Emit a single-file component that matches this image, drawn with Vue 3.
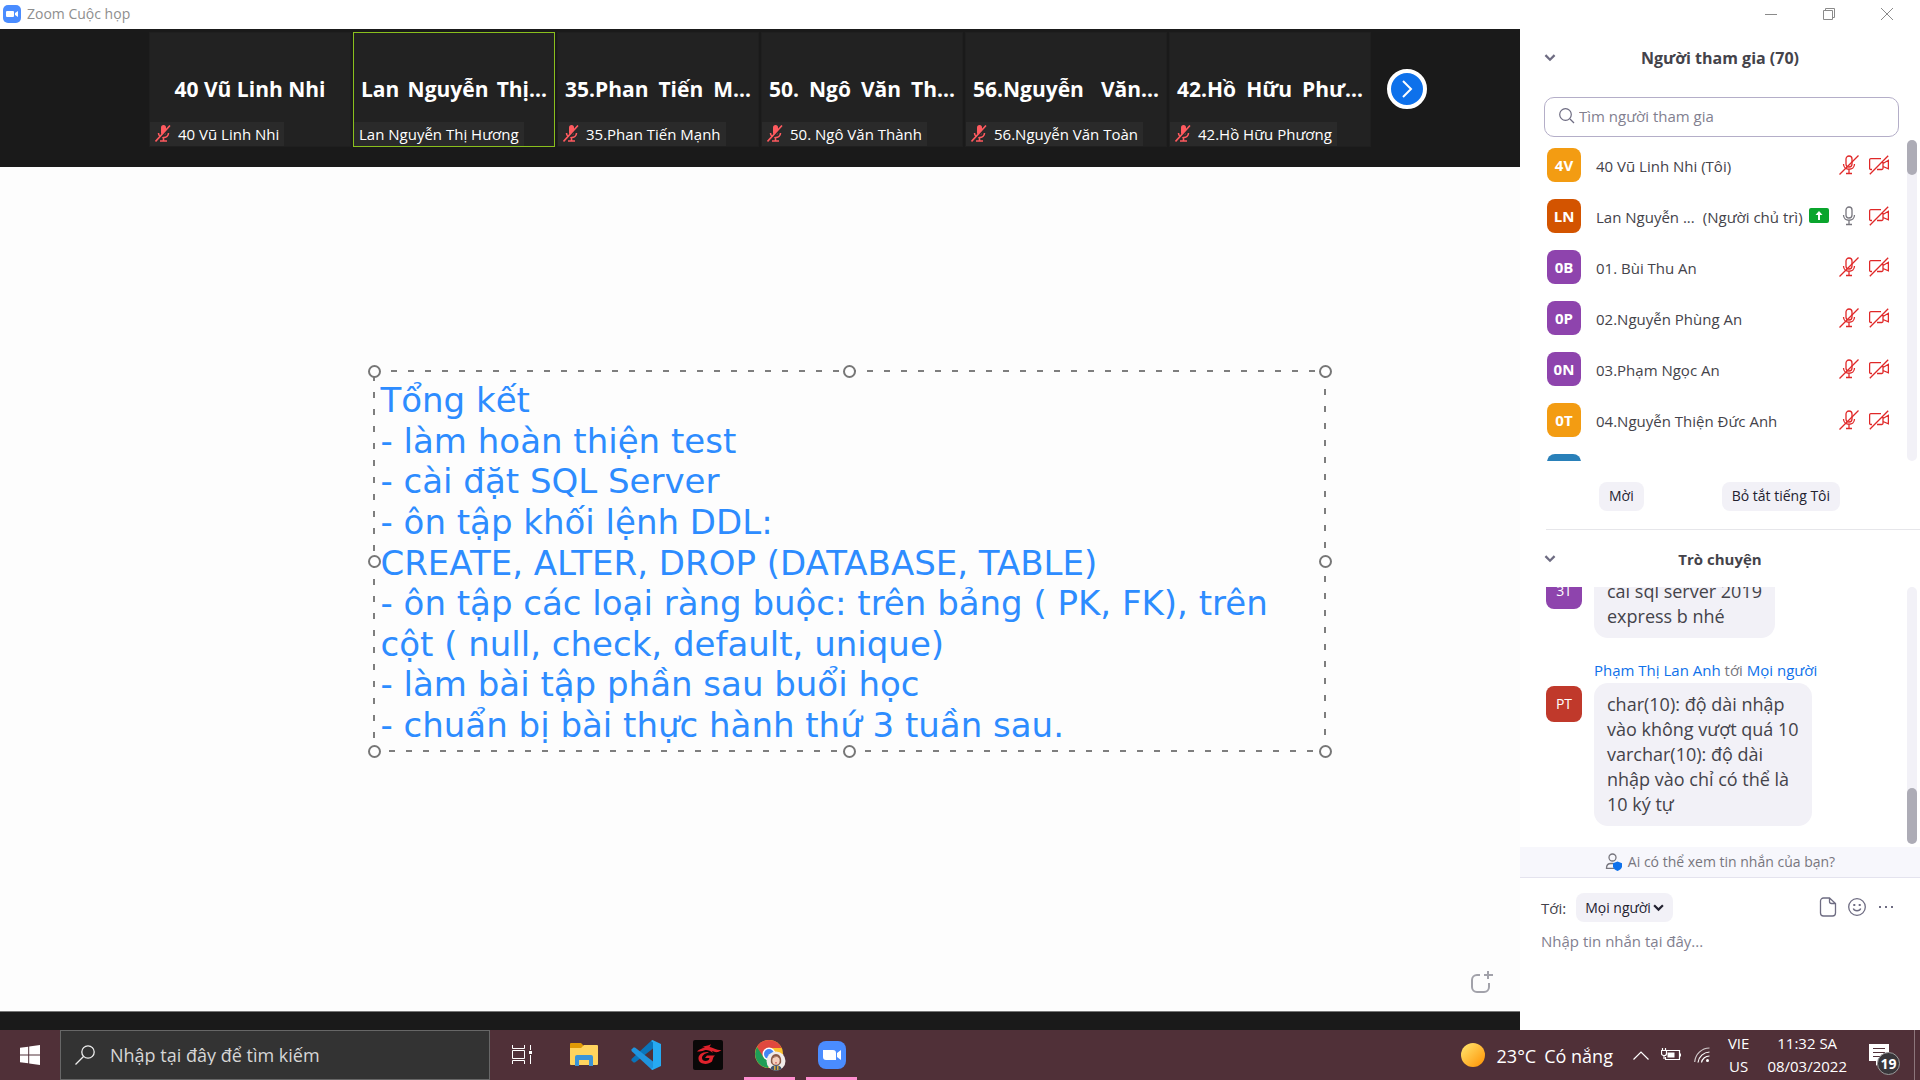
<script setup>
import { ref } from 'vue'

const tiles = [
  { name: '40 Vũ Linh Nhi', short: '40 Vũ Linh Nhi', muted: true },
  { name: 'Lan Nguyễn Thị Hương', short: 'Lan Nguyễn Thị...', cut: true, active: true },
  { name: '35.Phan Tiến Mạnh', short: '35.Phan Tiến M...', cut: true, muted: true },
  { name: '50. Ngô Văn Thành', short: '50. Ngô Văn Th...', cut: true, muted: true },
  { name: '56.Nguyễn Văn Toàn', short: '56.Nguyễn Văn...', cut: true, muted: true },
  { name: '42.Hồ Hữu Phương', short: '42.Hồ Hữu Phư...', cut: true, muted: true },
]

const notes = [
  'Tổng kết',
  '- làm hoàn thiện test',
  '- cài đặt SQL Server',
  '- ôn tập khối lệnh DDL:',
  'CREATE, ALTER, DROP (DATABASE, TABLE)',
  '- ôn tập các loại ràng buộc: trên bảng ( PK, FK), trên',
  'cột ( null, check, default, unique)',
  '- làm bài tập phần sau buổi học',
  '- chuẩn bị bài thực hành thứ 3 tuần sau.',
]

const handles = ['nw', 'n', 'ne', 'w', 'e', 'sw', 's', 'se']

const people = [
  { initials: '4V', name: '40 Vũ Linh Nhi (Tôi)', tone: 'amber', muted: true },
  { initials: 'LN', name: 'Lan Nguyễn ...', role: '(Người chủ trì)', tone: 'rust', muted: false, sharing: true },
  { initials: '0B', name: '01. Bùi Thu An', tone: 'violet', muted: true },
  { initials: '0P', name: '02.Nguyễn Phùng An', tone: 'violet', muted: true },
  { initials: '0N', name: '03.Phạm Ngọc An', tone: 'violet', muted: true },
  { initials: '0T', name: '04.Nguyễn Thiện Đức Anh', tone: 'amber', muted: true },
]

const reply = ['char(10): độ dài nhập', 'vào không vượt quá 10', 'varchar(10): độ dài', 'nhập vào chỉ có thể là', '10 ký tự']

const search = ref('')
const draft = ref('')
const query = ref('')
</script>

<template>
  <div class="desktop">
    <header class="titlebar">
      <svg class="app-logo" viewBox="0 0 18 18" aria-hidden="true">
        <rect width="18" height="18" rx="5" fill="#4a8cff" />
        <rect x="3" y="6" width="8" height="6" rx="1" fill="#fff" />
        <path d="M12 8l3-2v6l-3-2z" fill="#fff" />
      </svg>
      <span class="app-title">Zoom Cuộc họp</span>
      <div class="win-controls">
        <button type="button" aria-label="Thu nhỏ"><svg viewBox="0 0 12 12"><path d="M0 6.500h12" /></svg></button>
        <button type="button" aria-label="Khôi phục"><svg viewBox="0 0 12 12"><path d="M.5 2.500h9v9h-9zM2.500 2.500v-2h9v9h-2" /></svg></button>
        <button type="button" aria-label="Đóng"><svg viewBox="0 0 12 12"><path d="M0 0l12 12M12 0L0 12" /></svg></button>
      </div>
    </header>

    <div class="meeting">
      <main class="stage">
        <section class="strip">
          <div v-for="t in tiles" :key="t.name" class="tile" :class="{ active: t.active }">
            <strong class="tile-name" :class="{ cut: t.cut }">{{ t.short }}</strong>
            <span class="tile-label">
              <svg v-if="t.muted" class="tile-mic" viewBox="0 0 16 17" aria-hidden="true">
                <rect x="6" y="0" width="5" height="10" rx="2.500" fill="#ff5a5f" />
                <path d="M3.500 8c0 6 10 6 10 0M8.500 12.500V16M5 16h7" fill="none" stroke="#ff5a5f" stroke-width="1.600" />
                <path d="M2 17L16 1" stroke="#2a2a2a" stroke-width="2" />
                <path d="M.5 16.500L15 .5" stroke="#ff5a5f" stroke-width="1.600" />
              </svg>
              {{ t.name }}
            </span>
          </div>
          <button type="button" class="next" aria-label="Tiếp theo">
            <svg viewBox="0 0 12 18"><path d="M2 1l8 8-8 8" /></svg>
          </button>
        </section>

        <section class="canvas">
          <div class="note">
            <svg class="frame" aria-hidden="true"><rect x="1" y="1" width="100%" height="100%" /></svg>
            <p v-for="line in notes" :key="line">{{ line }}</p>
            <i v-for="h in handles" :key="h" class="handle" :class="h"></i>
          </div>
          <button type="button" class="new-page" aria-label="Trang mới">
            <svg viewBox="0 0 24 24"><path d="M10 5H7a5 5 0 0 0-5 5v7a5 5 0 0 0 5 5h7a5 5 0 0 0 5-5v-4M18 1v8M14 5h9" /></svg>
          </button>
        </section>
        <div class="stage-foot"></div>
      </main>

      <aside class="side">
        <div class="panel-head">
          <button type="button" class="fold" aria-label="Thu gọn danh sách"><svg viewBox="0 0 10 7"><path d="M1 1l4 4 4-4" /></svg></button>
          <h2>Người tham gia (70)</h2>
        </div>
        <label class="search">
          <svg viewBox="0 0 16 16" aria-hidden="true"><circle cx="6.500" cy="6.500" r="5.800" /><path d="M11 11l4 4" /></svg>
          <input v-model="search" type="text" placeholder="Tìm người tham gia" aria-label="Tìm người tham gia" />
        </label>

        <div class="roster">
          <ul>
            <li v-for="p in people" :key="p.initials">
              <span class="avatar" :class="p.tone">{{ p.initials }}</span>
              <span class="who">{{ p.name }}</span>
              <span v-if="p.role" class="role">{{ p.role }}</span>
              <svg v-if="p.sharing" class="share" viewBox="0 0 20 15" aria-hidden="true">
                <rect width="20" height="15" rx="2" fill="#0aa52d" />
                <path d="M10 12V6" stroke="#fff" stroke-width="2" /><path d="M6.500 7L10 3l3.500 4z" fill="#fff" />
              </svg>
              <svg v-if="p.muted" class="ico red" viewBox="0 0 20 20" aria-hidden="true">
                <rect x="7" y="1" width="6" height="11" rx="3" /><path d="M4.500 9c0 7 11 7 11 0M10 14.500V18.500M7 18.500h6M.5 19.500L19.500 .5" />
              </svg>
              <svg v-else class="ico gray" viewBox="0 0 20 20" aria-hidden="true">
                <rect x="7" y="1" width="6" height="11" rx="3" /><path d="M4.500 9c0 7 11 7 11 0M10 14.500V18.500M7 18.500h6" />
              </svg>
              <svg class="ico red cam" viewBox="0 0 20 20" aria-hidden="true">
                <path d="M3 14.500H1.800A1.300 1.300 0 0 1 .6 13.200V4.800A1.300 1.300 0 0 1 1.800 3.600H12M14 7v6.200a1.300 1.300 0 0 1-1.300 1.300H8M14 8.500l5.400-3.200v8.500L14 11.500M.8 19.300L19.200 .7" />
              </svg>
            </li>
            <li><span class="avatar blue"></span></li>
          </ul>
          <div class="track"><div class="thumb short"></div></div>
        </div>

        <div class="actions">
          <button type="button" class="pill">Mời</button>
          <button type="button" class="pill">Bỏ tắt tiếng Tôi</button>
        </div>

        <div class="panel-head chat-head">
          <button type="button" class="fold" aria-label="Thu gọn trò chuyện"><svg viewBox="0 0 10 7"><path d="M1 1l4 4 4-4" /></svg></button>
          <h2>Trò chuyện</h2>
        </div>
        <div class="chat">
          <div class="messages">
            <div class="message">
              <span class="avatar big violet">3T</span>
              <p class="bubble">cài sql server 2019<br />express b nhé</p>
            </div>
            <p class="from"><a href="#">Phạm Thị Lan Anh</a> tới <a href="#">Mọi người</a></p>
            <div class="message">
              <span class="avatar big red-fill">PT</span>
              <p class="bubble"><template v-for="(l, i) in reply" :key="l"><br v-if="i" />{{ l }}</template></p>
            </div>
          </div>
          <div class="track end"><div class="thumb long"></div></div>
        </div>

        <button type="button" class="privacy">
          <svg viewBox="0 0 18 18" aria-hidden="true">
            <circle cx="7.500" cy="4.500" r="3.500" /><path d="M9 15.300H1.500C1.500 12 3.500 10.500 6 10.500h2.500" />
            <path class="shield" d="M12.500 8.500l4.500 1.800v3.200c0 2-2.500 3.700-4.500 4.500-2-.8-4.500-2.500-4.500-4.500v-3.200z" />
          </svg>
          Ai có thể xem tin nhắn của bạn?
        </button>

        <div class="composer">
          <div class="to-row">
            <label for="chat-to">Tới:</label>
            <span class="select-wrap">
              <select id="chat-to"><option>Mọi người</option></select>
              <svg viewBox="0 0 10 7" aria-hidden="true"><path d="M1 1l4 4 4-4" /></svg>
            </span>
            <div class="tools">
              <button type="button" aria-label="Tệp"><svg viewBox="0 0 18 20"><path d="M10.500 1H4.500A3 3 0 0 0 1.500 4v12a3 3 0 0 0 3 3h9a3 3 0 0 0 3-3V6.500zM10.500 1v3.500a2 2 0 0 0 2 2h4" /></svg></button>
              <button type="button" aria-label="Biểu tượng cảm xúc"><svg viewBox="0 0 20 20"><circle cx="10" cy="10" r="8.300" /><path d="M6.300 11.500c1 3 6.400 3 7.400 0" /><path d="M7.300 7v2M12.700 7v2" stroke-width="2" /></svg></button>
              <button type="button" aria-label="Thêm"><svg viewBox="0 0 20 20"><path d="M3 10h2M9 10h2M15 10h2" stroke-width="2" /></svg></button>
            </div>
          </div>
          <textarea v-model="draft" placeholder="Nhập tin nhắn tại đây..." aria-label="Tin nhắn"></textarea>
        </div>
      </aside>
    </div>

    <footer class="taskbar">
      <button type="button" class="start" aria-label="Bắt đầu">
        <svg viewBox="0 0 20 20"><path fill="#fff" d="M0 2.800l8.200-1.100v7.800H0zM9.200 1.500L20 0v9.500H9.200zM0 10.500h8.200v7.800L0 17.200zM9.200 10.500H20V20L9.200 18.500z" /></svg>
      </button>
      <label class="finder">
        <svg viewBox="0 0 20 20" aria-hidden="true"><circle cx="13" cy="7" r="6.200" /><path d="M8.500 11.500L.5 19.500" /></svg>
        <input v-model="query" type="text" placeholder="Nhập tại đây để tìm kiếm" aria-label="Nhập tại đây để tìm kiếm" />
      </label>
      <nav class="apps">
        <button type="button" aria-label="Chế độ xem tác vụ">
          <svg width="20" height="20" viewBox="0 0 20 20" fill="none" stroke="#fff"><path d="M.5 0v3.500h12V0M.5 5.500h12v8h-12zM.5 19v-3.500h12V19M18.500 0v5M18.500 10v9" /><path d="M17 7.500h3" stroke-width="3" /></svg>
        </button>
        <button type="button" aria-label="File Explorer">
          <svg width="28" height="24" viewBox="0 0 28 24"><path d="M0 1a1 1 0 0 1 1-1h10l3 3v5H0z" fill="#e09a06" /><path d="M0 5h11l3-3h13a1 1 0 0 1 1 1v18a1 1 0 0 1-1 1H1a1 1 0 0 1-1-1z" fill="#ffd45e" /><path d="M5 23V14a2 2 0 0 1 2-2h14a2 2 0 0 1 2 2v9h-4v-6H9v6z" fill="#3b94d8" /></svg>
        </button>
        <button type="button" aria-label="Visual Studio Code">
          <svg width="30" height="30" viewBox="0 0 30 30"><path d="M22 8.500L4 22.500 2.500 22.500.5 20.500v-1.500L20 1l2-1z" fill="#0a74ba" /><path d="M22 21.500L4 7.500H2.500L.5 9.500V11L20 29l2 1z" fill="#1f94de" /><path d="M21.500 0l8.500 4v22l-8.500 4-1.500-1 2-1.500v-25L20 1z" fill="#26aaf2" /></svg>
        </button>
        <button type="button" aria-label="Garena">
          <svg width="30" height="30" viewBox="0 0 30 30"><rect width="30" height="30" rx="2" fill="#0a0808" /><path d="M4 11.500C7 8.500 10 8.500 12 7l-3 .2C12 5.500 15 6 18 4.200L16.500 7c4 .5 6 3 12 3.200L25 12c-3 .5-4-.5-6-1l1 2c-3-2.500-6-3.500-9-2.500-2 .8-4 1-7 1z" fill="#e0222c" /><path d="M15.500 12C9 11.500 5 15 5.500 19c.8 5.500 9 6.500 13.500 2.500l1.500-4.500 1.500-1.500h-8l-2 2.500h4.500l-.8 2c-3 1.800-6.700.8-6.700-2 0-2.500 2.500-4.500 6.500-5.500z" fill="#e0222c" /></svg>
        </button>
        <button type="button" class="running" aria-label="Google Chrome">
          <svg width="32" height="32" viewBox="0 0 32 32">
            <circle cx="15" cy="15" r="14" fill="#fbc02d" />
            <path d="M15 1a14 14 0 0 1 12.500 8H15L8 18 3 8A14 14 0 0 1 15 1z" fill="#e0483e" />
            <path d="M3 8a14 14 0 0 0 11 21l5-9-9-1z" fill="#1f9d57" />
            <circle cx="15" cy="15" r="6.500" fill="#fff" /><circle cx="15" cy="15" r="5" fill="#4285f4" />
            <circle cx="22" cy="22" r="9.500" fill="#f0ebe9" /><path d="M17 24c-2-12 12-12 10 0l-2 2h-6z" fill="#8a5a47" /><ellipse cx="22" cy="21.500" rx="3.700" ry="4.300" fill="#f4d0be" /><path d="M18.300 20c1-2 6-3 7.400 0l-.5-2.500h-6z" fill="#8a5a47" /><path d="M16.500 29.800c1-5 10-5 11 0a9.500 9.500 0 0 1-11 0z" fill="#41566e" /><path d="M20 27h1.500v4H20zM23 27h1.500v4H23z" fill="#d8a83c" /><path d="M21 23.500c.7.600 1.400.6 2 0" stroke="#c44" fill="none" />
          </svg>
        </button>
        <button type="button" class="running" aria-label="Zoom">
          <svg width="28" height="28" viewBox="0 0 28 28"><rect width="28" height="28" rx="8" fill="#4a8cff" /><path d="M5 9h10a3 3 0 0 1 3 3v7H8a3 3 0 0 1-3-3zM19 12l4-3v10l-4-3z" fill="#fff" /></svg>
        </button>
      </nav>
      <div class="tray">
        <svg width="24" height="24" viewBox="0 0 24 24" aria-hidden="true">
          <defs><linearGradient id="sun" x1="0" y1="0" x2="1" y2="1"><stop offset="0" stop-color="#ffe873" /><stop offset="1" stop-color="#ff9000" /></linearGradient></defs>
          <circle cx="12" cy="12" r="12" fill="url(#sun)" />
        </svg>
        <span class="weather"><span>23°C</span><span>Có nắng</span></span>
        <svg class="caret" width="16" height="9" viewBox="0 0 16 9" aria-hidden="true"><path d="M.5 8.500L8 1l7.500 7.500" /></svg>
        <svg class="battery" width="20" height="14" viewBox="0 0 20 14" aria-hidden="true"><path d="M6 2.500h12.500v9H4.500V9M19.500 5.500v3M1.500 0v2.500M4.500 0v2.500M.5 2.500h5v3a2 2 0 0 1-2 2h-1a2 2 0 0 1-2-2zM3 7.500v3.500" /><path d="M6.500 4.500h7v5h-7z" fill="#fff" stroke="none" /></svg>
        <svg class="wifi" width="16" height="16" viewBox="0 0 16 16" aria-hidden="true"><path opacity=".75" d="M.7 15A15 15 0 0 1 15.500 1" /><path d="M4 15.500A12 12 0 0 1 15.500 5M7.500 15.500A8 8 0 0 1 15.500 9" /><circle cx="13.500" cy="13.500" r="1.500" fill="#fff" stroke="none" /></svg>
        <span class="stack lang"><span>VIE</span><span>US</span></span>
        <span class="stack"><span>11:32 SA</span><span>08/03/2022</span></span>
        <button type="button" class="notify" aria-label="Thông báo">
          <svg width="20" height="22" viewBox="0 0 20 22"><path d="M0 0h20v17h-9l-4 5v-5H0z" fill="#fff" /><path d="M4 4.500h12M4 8.500h12M4 12.500h8" stroke="#503038" /></svg>
          <span class="badge">19</span>
        </button>
      </div>
    </footer>
  </div>
</template>

<style>
body {
  margin: 0;
}
</style>

<style scoped>
.desktop {
  min-height: 100vh;
  display: flex;
  flex-direction: column;
  background: #fff;
  color: #44434a;
  font: 15px/20px "Open Sans", "Noto Sans", sans-serif;
}
.desktop * {
  box-sizing: border-box;
}
button,
input,
select,
textarea {
  font: inherit;
  color: inherit;
  border: 0;
  padding: 0;
  margin: 0;
  background: none;
  outline: 0;
}
button {
  display: flex;
  align-items: center;
  justify-content: center;
}
h2,
p,
ul {
  margin: 0;
  padding: 0;
}
svg {
  flex: none;
}

.titlebar {
  height: 29px;
  display: flex;
  align-items: center;
  padding: 0 4px 2px 3px;
  color: #8e8e8e;
}
.app-logo {
  width: 18px;
  height: 18px;
}
.app-title {
  margin-left: 6px;
  font-size: 14px;
}
.win-controls {
  margin-left: auto;
  display: flex;
}
.win-controls button {
  width: 58px;
  height: 27px;
}
.win-controls svg {
  width: 12px;
  height: 12px;
  fill: none;
  stroke: #8a8a8a;
}

.meeting {
  flex: 1;
  display: flex;
}
.stage {
  flex: 1;
  min-width: 0;
  display: flex;
  flex-direction: column;
}
.strip {
  height: 138px;
  display: flex;
  align-items: center;
  justify-content: center;
  gap: 2px;
  padding-bottom: 18px;
  padding-left: 56px;
  background: #1a1a1a;
}
.tile {
  position: relative;
  width: 202px;
  height: 115px;
  display: flex;
  align-items: center;
  justify-content: center;
  border: 1px solid #1f1f1f;
  background: #222;
  color: #fff;
}
.tile.active {
  border-color: #89bf1d;
}
.tile-name {
  font-size: 21px;
  line-height: 28px;
  white-space: nowrap;
}
.tile-name.cut {
  width: 186px;
  text-align-last: justify;
}
.tile-label {
  position: absolute;
  left: 0;
  bottom: 0;
  height: 24px;
  display: flex;
  align-items: center;
  gap: 7px;
  padding: 0 5px;
  background: #2a2a2a;
  white-space: nowrap;
}
.tile-mic {
  width: 16px;
  height: 17px;
}
.next {
  width: 40px;
  height: 40px;
  margin-left: 14px;
  border: 4px solid #fff;
  border-radius: 50%;
  background: #0e71eb;
}
.next svg {
  width: 12px;
  height: 18px;
  fill: none;
  stroke: #fff;
  stroke-width: 2;
}

.canvas {
  position: relative;
  flex: 1;
  display: flex;
  justify-content: center;
  align-items: flex-start;
  padding: 204px 0 0 178px;
  background: #fdfdfd;
}
.note {
  position: relative;
  width: 951px;
  height: 380px;
  display: flex;
  flex-direction: column;
  justify-content: space-between;
  padding: 9px 0 6px 7px;
  color: #2d8cff;
  font: 34px/40px "DejaVu Sans", sans-serif;
  white-space: nowrap;
}
.frame {
  position: absolute;
  top: -1px;
  left: -1px;
  width: 100%;
  height: 100%;
  overflow: visible;
  fill: none;
  stroke: #7e7e7e;
  stroke-width: 2;
  stroke-dasharray: 6 11;
}
.handle {
  position: absolute;
  width: 13px;
  height: 13px;
  margin: -6px;
  border: 2px solid #777;
  border-radius: 50%;
  background: #fff;
}
.nw, .n, .ne { top: 0; }
.w, .e { top: 50%; }
.sw, .s, .se { top: 100%; }
.nw, .w, .sw { left: 0; }
.n, .s { left: 50%; }
.ne, .e, .se { left: 100%; }
.new-page {
  position: absolute;
  right: 26px;
  bottom: 17px;
}
.new-page svg {
  width: 24px;
  height: 24px;
  fill: none;
  stroke: #a2a2aa;
  stroke-width: 2;
}
.stage-foot {
  height: 19px;
  border-top: 1px solid #777;
  background: #1a1a1a;
}

.side {
  width: 400px;
  display: flex;
  flex-direction: column;
}
.panel-head {
  height: 57px;
  display: flex;
  align-items: center;
  padding: 0 24px;
}
.panel-head h2 {
  flex: 1;
  margin-right: 12px;
  text-align: center;
  font-size: 16px;
  color: #44434a;
}
.chat-head h2 {
  font-size: 15px;
}
.fold svg {
  width: 12px;
  height: 8px;
  fill: none;
  stroke: #6e6c82;
  stroke-width: 2;
}
.search {
  height: 40px;
  margin: 11px 21px 3px 24px;
  display: flex;
  align-items: center;
  gap: 4px;
  padding: 0 14px 2px;
  border: 1px solid #b4aec8;
  border-radius: 10px;
}
.search svg {
  width: 16px;
  height: 16px;
  fill: none;
  stroke: #6e6c82;
  stroke-width: 1.2;
}
.search input {
  flex: 1;
  min-width: 0;
}
.search input::placeholder,
.composer textarea::placeholder {
  color: #82808f;
  opacity: 1;
}
.roster {
  height: 321px;
  display: flex;
  overflow: hidden;
}
.roster ul {
  flex: 1;
  list-style: none;
}
.roster li {
  height: 51px;
  display: flex;
  align-items: center;
  padding: 0 18px 2px 27px;
}
.avatar {
  flex: none;
  width: 34px;
  height: 34px;
  display: flex;
  align-items: center;
  justify-content: center;
  border-radius: 8px;
  color: #fff;
  font-weight: 700;
}
.amber { background: #f39c12; }
.rust { background: #d35400; }
.violet { background: #8e44ad; }
.blue { background: #2980b9; }
.red-fill { background: #c0392b; }
.who {
  margin-left: 15px;
  padding-top: 2px;
  white-space: nowrap;
}
.role {
  margin-left: 8px;
  padding-top: 2px;
  white-space: nowrap;
}
.share {
  width: 20px;
  height: 15px;
  margin-left: 6px;
}
.ico {
  width: 20px;
  height: 20px;
  margin-left: auto;
  fill: none;
  stroke-width: 1.3;
}
.ico.red { stroke: #e02828; }
.ico.gray { stroke: #77767e; }
.ico.cam { margin-left: 10px; }
.track {
  width: 10px;
  margin-right: 3px;
  display: flex;
  flex-direction: column;
  border-radius: 5px;
  background: #f2f1f7;
}
.track.end {
  justify-content: flex-end;
}
.thumb {
  border-radius: 5px;
  background: #adacb6;
}
.short { height: 35px; }
.long { height: 56px; }
.actions {
  height: 69px;
  margin-left: 26px;
  display: flex;
  align-items: center;
  gap: 78px;
  padding: 2px 0 0 53px;
  border-bottom: 1px solid #e6e6ea;
}
.pill {
  height: 29px;
  padding: 0 10px;
  border-radius: 8px;
  background: #f2f1f7;
  color: #232230;
  font-size: 14px;
}
.chat {
  flex: 1;
  min-height: 257px;
  display: flex;
}
.messages {
  flex: 1;
  height: 257px;
  display: flex;
  flex-direction: column;
  justify-content: flex-end;
  overflow: hidden;
  padding: 0 0 18px 26px;
}
.message {
  display: flex;
  align-items: flex-start;
  gap: 12px;
}
.avatar.big {
  width: 36px;
  height: 36px;
  margin-top: 3px;
  font-size: 14px;
  font-weight: 400;
}
.bubble {
  padding: 9px 13px;
  border-radius: 14px;
  background: #f2f1f7;
  font-size: 18px;
  line-height: 25px;
}
.from {
  margin: 22px 0 3px 48px;
  color: #77767e;
  font-size: 15px;
}
.from a {
  color: #0e71eb;
  text-decoration: none;
}
.privacy {
  height: 31px;
  margin-top: 3px;
  gap: 5px;
  border-bottom: 1px solid #e4e3ee;
  background: #f7f7fc;
  color: #77767e;
  font-size: 14px;
}
.privacy svg {
  width: 18px;
  height: 18px;
  fill: none;
  stroke: #77767e;
  stroke-width: 1.3;
}
.privacy .shield {
  fill: #0e71eb;
  stroke: none;
}
.composer {
  height: 152px;
  padding: 15px 21px 0;
}
.to-row {
  height: 29px;
  display: flex;
  align-items: center;
}
.select-wrap {
  position: relative;
  height: 29px;
  margin-left: 10px;
}
select {
  appearance: none;
  width: 97px;
  height: 29px;
  padding-left: 9px;
  border-radius: 8px;
  background: #f2f1f7;
  color: #232230;
  font-size: 14px;
}
.select-wrap svg {
  position: absolute;
  right: 9px;
  top: 11px;
  width: 11px;
  height: 8px;
  fill: none;
  stroke: #232230;
  stroke-width: 2;
  pointer-events: none;
}
.tools {
  margin-left: auto;
  display: flex;
  gap: 9px;
  padding: 0 3px 2px 0;
}
.tools svg {
  width: 20px;
  height: 20px;
  fill: none;
  stroke: #6e6c82;
  stroke-width: 1.3;
}
.composer textarea {
  width: 100%;
  height: 80px;
  margin-top: 9px;
  resize: none;
}

.taskbar {
  height: 50px;
  display: flex;
  background: #503038;
  color: #fff;
}
.start {
  width: 60px;
}
.start svg {
  width: 20px;
  height: 20px;
}
.finder {
  width: 430px;
  display: flex;
  align-items: center;
  gap: 15px;
  padding: 0 14px;
  border: 1px solid #676767;
  background: #333;
}
.finder svg {
  width: 20px;
  height: 20px;
  fill: none;
  stroke: #eee;
  stroke-width: 1.3;
}
.finder input {
  flex: 1;
  min-width: 0;
  font-size: 18px;
}
.finder input::placeholder {
  color: #d6d6d6;
  opacity: 1;
}
.apps {
  display: flex;
  gap: 11px;
  padding-left: 6px;
}
.apps button {
  width: 51px;
  border-bottom: 3px solid transparent;
  padding-top: 3px;
}
.apps .running {
  border-color: #ff8fd0;
}
.tray {
  margin-left: auto;
  display: flex;
  align-items: center;
  padding-right: 5px;
}
.weather {
  display: flex;
  gap: 8px;
  margin: 0 20px 0 12px;
  padding-top: 2px;
  font-size: 18px;
}
.caret,
.battery,
.wifi {
  fill: none;
  stroke: #fff;
  stroke-width: 1.2;
}
.battery {
  margin: 0 13px 0 12px;
}
.stack {
  display: flex;
  flex-direction: column;
  align-items: center;
  line-height: 23px;
}
.lang {
  margin: 0 18px;
}
.notify {
  position: relative;
  margin: 0 25px 0 22px;
}
.badge {
  position: absolute;
  left: 8px;
  top: 8px;
  width: 23px;
  height: 23px;
  border: 1px solid #9a9a9a;
  border-radius: 50%;
  background: #38363a;
  font-size: 14px;
  line-height: 21px;
  font-weight: 700;
  text-align: center;
}
.tray::after {
  content: "";
  align-self: stretch;
  width: 1px;
  background: #8c767b;
}
</style>
